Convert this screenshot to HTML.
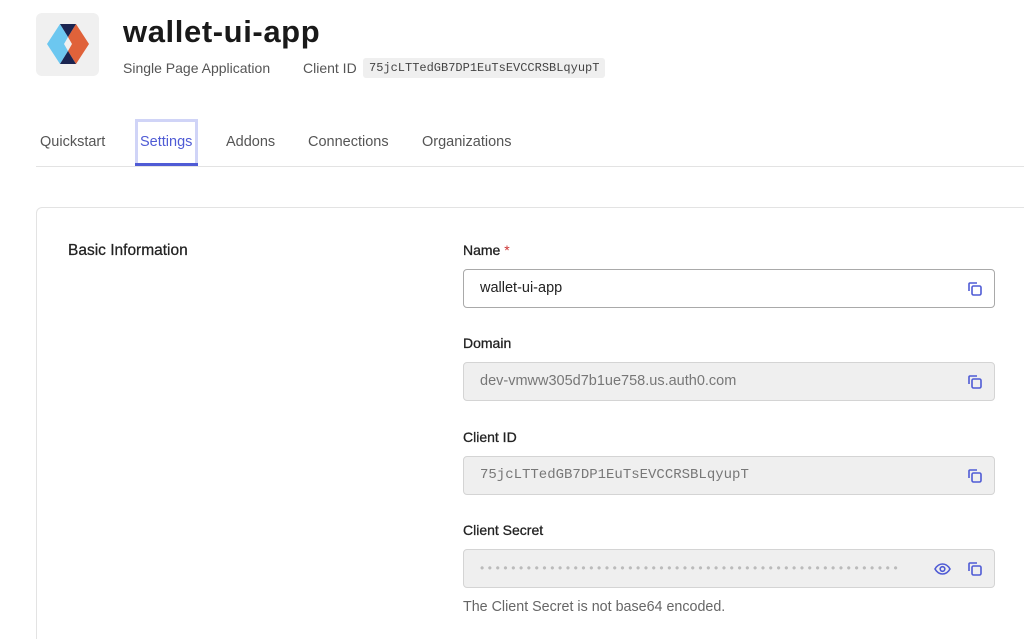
<!DOCTYPE html>
<html><head><meta charset="utf-8"><style>
*{box-sizing:border-box;margin:0;padding:0}
html,body{width:1024px;height:639px;overflow:hidden}
body{background:#fff;font-family:"Liberation Sans",sans-serif;color:#1e212a;position:relative}
.abs{position:absolute}
.logo{left:36px;top:13px;width:63px;height:63px;background:#f0f0f0;border-radius:6px}
.sub{top:60px;font-size:14px;color:#555}
.cid{left:363px;top:58px;height:20px;padding:0 6px;background:#efefef;border-radius:3px;font-family:"Liberation Mono",monospace;font-size:12px;line-height:20px;color:#444}
.tab{top:134px;font-size:14.5px;color:#555}
.sel{left:135px;top:119px;width:63px;height:46px;border:3px solid #d0d4f7;border-bottom:none}
.ul{left:135px;top:163px;width:63px;height:3px;background:#4f5bd5}
.line{left:36px;top:166px;width:988px;height:1px;background:#e3e3e3}
.card{left:36px;top:207px;width:1010px;height:440px;border:1px solid #e3e3e3;border-bottom:none;border-radius:6px 6px 0 0}
.h{left:68px;top:242px;font-size:15.5px;color:#222;-webkit-text-stroke:0.25px #222}
.lbl{left:463px;font-size:14px;color:#222;-webkit-text-stroke:0.3px #222}
.inp{left:463px;width:532px;height:39px;border:1px solid #d4d4d4;border-radius:4px;background:#efefef;font-size:14.5px;line-height:37px;padding-left:16px;color:#777}
.mono{font-family:"Liberation Mono",monospace;font-size:14px}
.ic{position:absolute;top:11px}
</style></head><body>
<div class="abs logo"><svg width="63" height="63" viewBox="36 13 63 63">
<polygon points="60,24 47,44 60,64 68,51 64,44 68,37" fill="#6cc7f0"/>
<polygon points="76,24 89,44 76,64 68,51 72,44 68,37" fill="#e0623a"/>
<polygon points="60,24 76,24 68,37" fill="#1b2450"/>
<polygon points="60,64 76,64 68,51" fill="#1b2450"/>
</svg></div>
<div class="abs" style="left:123px;top:14px;font-size:31px;font-weight:700;letter-spacing:0.6px;color:#191919">wallet-ui-app</div>
<div class="abs sub" style="left:123px">Single Page Application</div>
<div class="abs sub" style="left:303px">Client ID</div>
<div class="abs cid">75jcLTTedGB7DP1EuTsEVCCRSBLqyupT</div>
<div class="abs sel"></div><div class="abs ul"></div>
<div class="abs tab" style="left:40px">Quickstart</div>
<div class="abs tab" style="left:140px;color:#4f5bd5">Settings</div>
<div class="abs tab" style="left:226px">Addons</div>
<div class="abs tab" style="left:308px">Connections</div>
<div class="abs tab" style="left:422px">Organizations</div>
<div class="abs line"></div>
<div class="abs card"></div>
<div class="abs h">Basic Information</div>
<div class="abs lbl" style="top:242px">Name <span style="color:#c33;-webkit-text-stroke:0">*</span></div>
<div class="abs inp" style="top:269px;background:#fff;border-color:#a9a9a9;color:#222">wallet-ui-app
<svg class="ic" style="left:503px" width="16" height="16" viewBox="0 0 16 16" fill="none" stroke="#4f5bd5" stroke-width="1.6"><path d="M2 10V3a1 1 0 0 1 1-1h7"/><rect x="5" y="5" width="9" height="9" rx="1.5"/></svg></div>
<div class="abs lbl" style="top:335px">Domain</div>
<div class="abs inp" style="top:362px">dev-vmww305d7b1ue758.us.auth0.com
<svg class="ic" style="left:503px" width="16" height="16" viewBox="0 0 16 16" fill="none" stroke="#4f5bd5" stroke-width="1.6"><path d="M2 10V3a1 1 0 0 1 1-1h7"/><rect x="5" y="5" width="9" height="9" rx="1.5"/></svg></div>
<div class="abs lbl" style="top:429px">Client ID</div>
<div class="abs inp mono" style="top:456px">75jcLTTedGB7DP1EuTsEVCCRSBLqyupT
<svg class="ic" style="left:503px" width="16" height="16" viewBox="0 0 16 16" fill="none" stroke="#4f5bd5" stroke-width="1.6"><path d="M2 10V3a1 1 0 0 1 1-1h7"/><rect x="5" y="5" width="9" height="9" rx="1.5"/></svg></div>
<div class="abs lbl" style="top:522px">Client Secret</div>
<div class="abs inp" style="top:549px;color:#bbb;font-size:12px;letter-spacing:3.6px">••••••••••••••••••••••••••••••••••••••••••••••••••••••
<svg class="ic" style="left:470px" width="17" height="16" viewBox="0 0 17 16" fill="none" stroke="#4f5bd5" stroke-width="1.6"><path d="M1 8c2-3.5 4.5-5 7.5-5s5.5 1.5 7.5 5c-2 3.5-4.5 5-7.5 5S3 11.5 1 8z"/><circle cx="8.5" cy="8" r="2.3"/></svg>
<svg class="ic" style="left:503px" width="16" height="16" viewBox="0 0 16 16" fill="none" stroke="#4f5bd5" stroke-width="1.6"><path d="M2 10V3a1 1 0 0 1 1-1h7"/><rect x="5" y="5" width="9" height="9" rx="1.5"/></svg></div>
<div class="abs" style="left:463px;top:599px;font-size:14.3px;color:#666">The Client Secret is not base64 encoded.</div>
</body></html>
